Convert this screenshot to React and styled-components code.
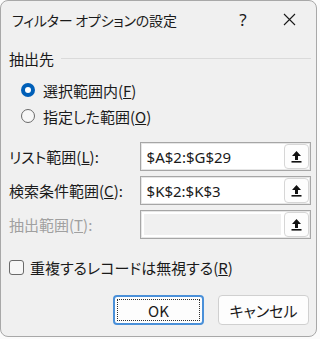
import React from 'react';
import styled, { createGlobalStyle } from 'styled-components';

const GlobalStyle = createGlobalStyle`
  html, body {
    margin: 0;
    padding: 0;
    background: #fbfbfb;
  }
  body {
    font-family: "Noto Sans CJK JP", "Noto Sans", sans-serif;
    font-feature-settings: "palt";
    color: #1a1a1a;
  }
`;

// ===== Window chrome =====
const Window = styled.div`
  box-sizing: border-box;
  width: 317px;
  height: 337px;
  background: #f0f0f0;
  border: 1px solid #a8a8a8;
  border-radius: 8px;
  display: flex;
  flex-direction: column;
  overflow: hidden;
`;

const TitleBar = styled.div`
  height: 37px;
  display: flex;
  align-items: center;
  padding-left: 11px;
  padding-right: 4px;
`;

const TitleText = styled.div`
  flex: 1;
  font-size: 14px;
  letter-spacing: -0.2px;
  color: #1a1a1a;
`;

const TitleButton = styled.div`
  width: 46px;
  height: 30px;
  display: grid;
  place-items: center;
  font-family: "Noto Sans", sans-serif;
  font-size: 17px;
  color: #1a1a1a;
`;

// ===== Body =====
const Body = styled.div`
  display: flex;
  flex-direction: column;
  padding: 0 5px 0 8px;
`;

const GroupHeader = styled.div`
  margin-top: 10px;
  height: 20px;
  display: flex;
  align-items: center;
  gap: 7px;
  font-size: 15px;
`;

const GroupLine = styled.div`
  flex: 1;
  height: 1px;
  background: #dadada;
`;

const RadioList = styled.div`
  margin-top: 9px;
  display: flex;
  flex-direction: column;
  padding-left: 12px;
`;

const RadioRow = styled.div`
  height: 26px;
  display: flex;
  align-items: center;
  gap: 8px;
  font-size: 15px;
`;

const RadioDot = styled.span`
  box-sizing: border-box;
  width: 14px;
  height: 14px;
  border-radius: 50%;
  display: grid;
  place-items: center;
  background: ${p => (p.checked ? '#005fb8' : '#f7f7f7')};
  border: ${p => (p.checked ? 'none' : '1px solid #6a6a6a')};

  &::after {
    content: '';
    display: ${p => (p.checked ? 'block' : 'none')};
    width: 6px;
    height: 6px;
    border-radius: 50%;
    background: #ffffff;
  }
`;

const Fields = styled.div`
  margin-top: 13px;
  display: flex;
  flex-direction: column;
  gap: 5px;
`;

const FieldRow = styled.div`
  display: flex;
  align-items: center;
`;

const FieldLabel = styled.div`
  width: 131px;
  font-size: 15px;
  color: ${p => (p.disabled ? '#a0a0a0' : '#1a1a1a')};
`;

const RefBox = styled.div`
  box-sizing: border-box;
  width: 172px;
  height: 29px;
  display: flex;
  align-items: center;
  gap: 3px;
  padding: 1px;
  background: #ffffff;
  border: 1px solid #a6a6a6;
  box-shadow: inset 0 0 0 1px #e6e6e6;
`;

const RefText = styled.div`
  flex: 1;
  align-self: stretch;
  margin: 2px 0 2px 2px;
  padding-left: 3px;
  display: flex;
  align-items: center;
  background: ${p => (p.disabled ? '#f0f0f0' : 'transparent')};
  font-family: "Noto Sans", sans-serif;
  font-size: 15px;
  color: #1a1a1a;
`;

const PickButton = styled.div`
  box-sizing: border-box;
  width: 25px;
  height: 25px;
  border: 1px solid #d6d6d6;
  border-radius: 4px;
  background: #fdfdfd;
  display: grid;
  place-items: center;
`;

const CheckRow = styled.div`
  margin-top: 18px;
  height: 20px;
  display: flex;
  align-items: center;
  gap: 6px;
  font-size: 15px;
`;

const CheckBox = styled.span`
  box-sizing: border-box;
  width: 15px;
  height: 15px;
  border: 1px solid #6a6a6a;
  border-radius: 3px;
  background: #f7f7f7;
`;

const ButtonRow = styled.div`
  margin-top: 18px;
  display: flex;
  justify-content: flex-end;
  gap: 14px;
  padding-right: 2px;
`;

const DialogButton = styled.div`
  position: relative;
  box-sizing: border-box;
  width: 91px;
  height: 30px;
  display: grid;
  place-items: center;
  border-radius: 4px;
  background: #fdfdfd;
  border: ${p => (p.focused ? '2px solid #4a90d9' : '1px solid #d0d0d0')};
  font-size: 15px;
  color: #1a1a1a;

  &::after {
    content: '';
    display: ${p => (p.focused ? 'block' : 'none')};
    position: absolute;
    inset: 2px;
    border: 1px dotted #303030;
  }
`;

const PickIcon = () => (
  <svg width="11" height="13" viewBox="0 0 11 13">
    <path d="M5.5 1 L10 6 L7 6 L7 10 L4 10 L4 6 L1 6 Z" fill="#111" />
    <rect x="0.5" y="11" width="10" height="1.6" fill="#111" />
  </svg>
);

const CloseIcon = () => (
  <svg width="13" height="13" viewBox="0 0 13 13">
    <path d="M1 1 L12 12 M12 1 L1 12" stroke="#1a1a1a" strokeWidth="1.1" />
  </svg>
);

const fields = [
  { key: 'L', name: 'リスト範囲', value: '$A$2:$G$29' },
  { key: 'C', name: '検索条件範囲', value: '$K$2:$K$3' },
  { key: 'T', name: '抽出範囲', value: '', disabled: true },
];

export default function App() {
  return (
    <>
      <GlobalStyle />
      <Window>
        <TitleBar>
          <TitleText>フィルター オプションの設定</TitleText>
          <TitleButton>?</TitleButton>
          <TitleButton>
            <CloseIcon />
          </TitleButton>
        </TitleBar>

        <Body>
          <GroupHeader>
            <span>抽出先</span>
            <GroupLine />
          </GroupHeader>

          <RadioList>
            <RadioRow>
              <RadioDot checked />
              <span>選択範囲内(<u>F</u>)</span>
            </RadioRow>
            <RadioRow>
              <RadioDot />
              <span>指定した範囲(<u>O</u>)</span>
            </RadioRow>
          </RadioList>

          <Fields>
            {fields.map(f => (
              <FieldRow key={f.key}>
                <FieldLabel disabled={f.disabled}>
                  {f.name}(<u>{f.key}</u>):
                </FieldLabel>
                <RefBox>
                  <RefText disabled={f.disabled}>{f.value}</RefText>
                  <PickButton>
                    <PickIcon />
                  </PickButton>
                </RefBox>
              </FieldRow>
            ))}
          </Fields>

          <CheckRow>
            <CheckBox />
            <span>重複するレコードは無視する(<u>R</u>)</span>
          </CheckRow>

          <ButtonRow>
            <DialogButton focused>OK</DialogButton>
            <DialogButton>キャンセル</DialogButton>
          </ButtonRow>
        </Body>
      </Window>
    </>
  );
}
